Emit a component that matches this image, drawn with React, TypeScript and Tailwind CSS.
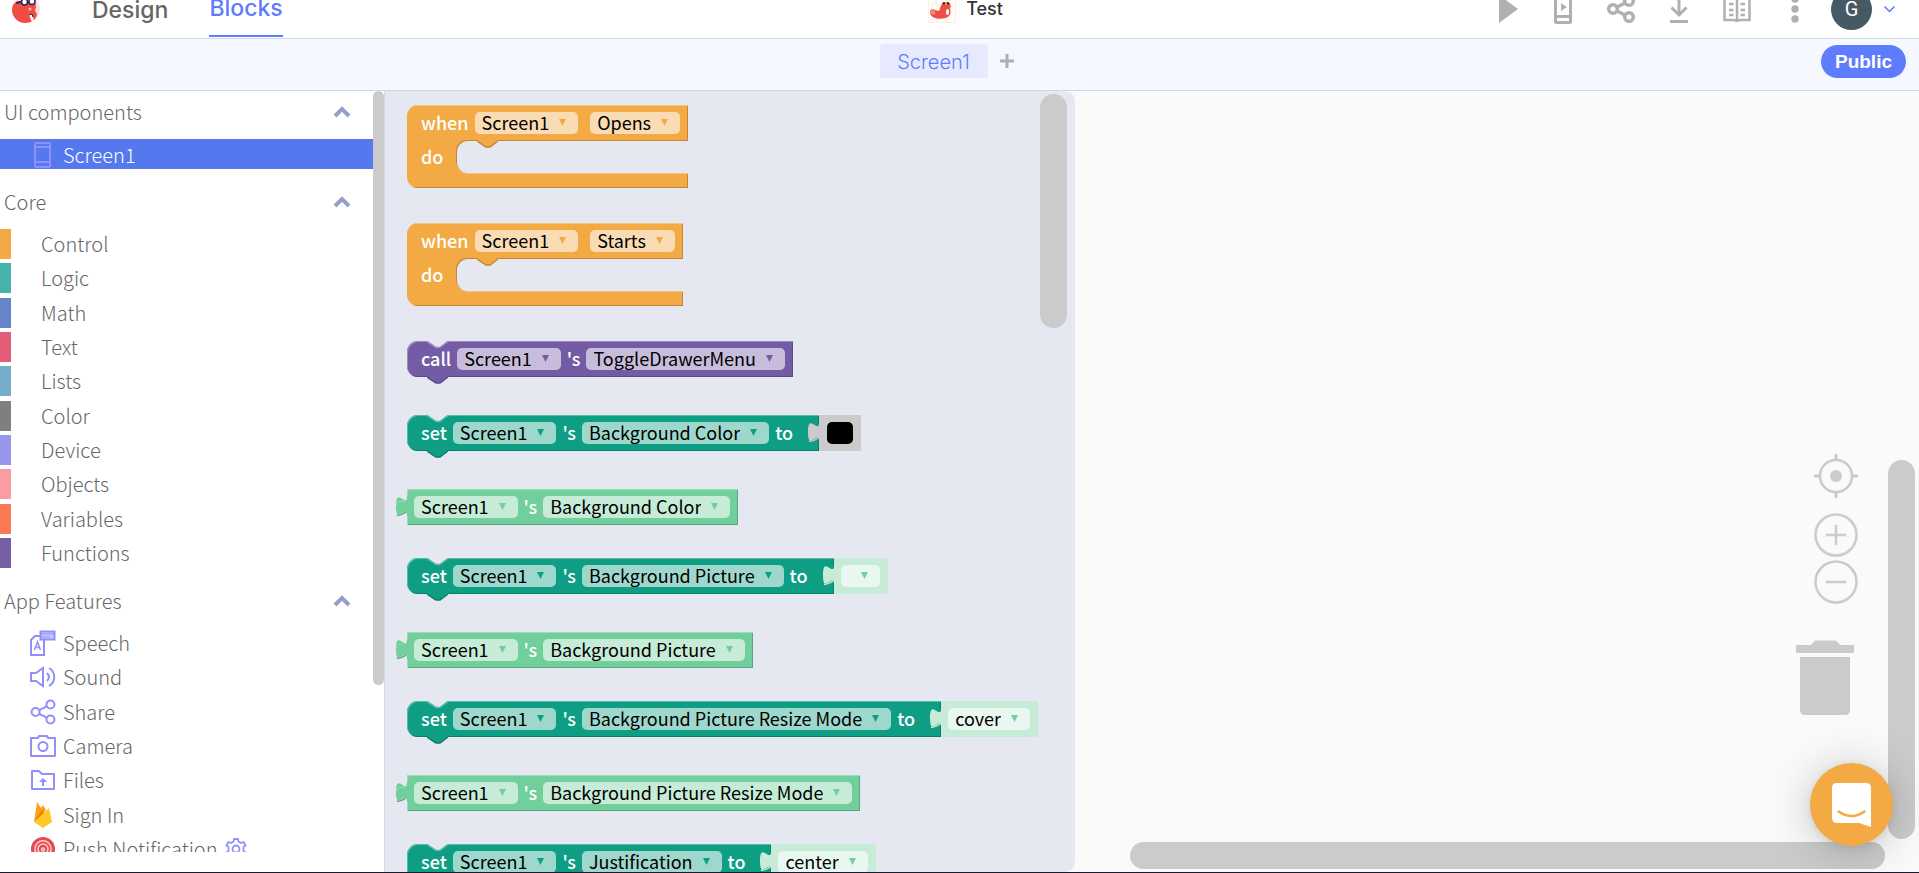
import React from 'react';
import clsx from 'clsx';

type Tone = 'orange' | 'purple' | 'teal' | 'green' | 'mint';

const TONES: Record<Tone, { body: string; field: string; arrow: string; fill: string; light: string; dark: string }> = {
    orange: { body: 'bg-[#f3aa44]', field: 'bg-[#fadcb4]', arrow: 'text-[#f3aa44]', fill: '#f3aa44', light: '#f7c47c', dark: '#c28836' },
    purple: { body: 'bg-[#745ba5]', field: 'bg-[#c7bddb]', arrow: 'text-[#745ba5]', fill: '#745ba5', light: '#9e8cc0', dark: '#5d4984' },
    teal: { body: 'bg-[#0e9e83]', field: 'bg-[#9ed8cc]', arrow: 'text-[#0e9e83]', fill: '#0e9e83', light: '#56bba8', dark: '#0b7e69' },
    green: { body: 'bg-[#71cf9b]', field: 'bg-[#c6ecd7]', arrow: 'text-[#71cf9b]', fill: '#71cf9b', light: '#9cddb9', dark: '#5aa67c' },
    mint: { body: 'bg-[#c6ecd7]', field: 'bg-[#e8f7ef]', arrow: 'text-[#71cf9b]', fill: '#c6ecd7', light: '#c6ecd7', dark: '#c6ecd7' },
};

const CORE = [
    { name: 'Control', color: 'bg-[#f3aa44]' },
    { name: 'Logic', color: 'bg-[#45b3aa]' },
    { name: 'Math', color: 'bg-[#6685c9]' },
    { name: 'Text', color: 'bg-[#e15d78]' },
    { name: 'Lists', color: 'bg-[#75acc9]' },
    { name: 'Color', color: 'bg-[#7f7f7f]' },
    { name: 'Device', color: 'bg-[#9795ec]' },
    { name: 'Objects', color: 'bg-[#fa9ca2]' },
    { name: 'Variables', color: 'bg-[#f97a55]' },
    { name: 'Functions', color: 'bg-[#765fa2]' },
];

/* ---------- Icons ---------- */

const Logo = () => (
    <svg width="28" height="28" viewBox="0 0 28 28">
        <circle cx="14" cy="14" r="14" fill="#fbdfe0" />
        <path d="M0 15c0-6 4-9 9-9h11c3 0 4 3 4 6l-1 4 2 3c-1 6-6 9-12 9C6 28 0 22 0 15z" fill="#f04e45" />
        <path d="M4 8l5-1M16 7h3" stroke="#2c2450" strokeWidth="2" fill="none" />
        <circle cx="12.500" cy="7" r="3" fill="#fff" stroke="#2c2450" strokeWidth="1.500" />
        <circle cx="20" cy="6.500" r="3" fill="#fff" stroke="#2c2450" strokeWidth="1.500" />
        <circle cx="18" cy="14" r="1.500" fill="#fbb" />
        <path d="M17 20l3-1 2 7-2 1z" fill="#fff" />
        <path d="M17 20l3-1 1 3" stroke="#2c2450" fill="none" />
    </svg>
);

const ProjectIcon = () => (
    <svg width="28" height="28" viewBox="0 0 28 28">
        <path d="M.5.5h27v27H.5zM0 9h28M0 19h28M9 0v28M19 0v28M0 0l28 28M28 0L0 28" stroke="#fdf0dc" fill="none" />
        <circle cx="14" cy="14" r="10" stroke="#fdf0dc" fill="none" />
        <path d="M2 17c0-3 3-4 5-2l4 1c1-1 1-6 4-8h6c2 1 2 4 1 6 1 3 1 8-5 9-7 2-15 0-15-6z" fill="#f04e45" />
        <path d="M2 17c0-3 3-4 5-2-1 1 0 3 1 4-3 1-6 0-6-2z" fill="#f58a7c" />
        <path d="M14 7h7v3h-6z" fill="#f5b843" />
        <circle cx="16" cy="8.500" r="1.300" fill="#222" />
        <circle cx="20" cy="8.500" r="1.300" fill="#222" />
        <ellipse cx="19.500" cy="17" rx="1.500" ry="3" fill="#fff" />
    </svg>
);

const PlayIcon = () => (
    <svg width="28" height="28" viewBox="0 0 28 28" fill="#b0b0b0"><path d="M8 0l19 14L8 28z" /></svg>
);

const PhonePlayIcon = () => (
    <svg width="18" height="30" viewBox="0 0 18 30" fill="none" stroke="#b0b0b0">
        <rect x="1.500" y="1.500" width="15" height="27" rx="1" strokeWidth="3" />
        <path d="M2 22.500h14" strokeWidth="3" />
        <path d="M7 9l6 4-6 4z" fill="#b0b0b0" stroke="none" />
    </svg>
);

const ShareIcon = ({ size, width, color }: { size: number; width: number; color: string }) => (
    <svg width={size} height={size} viewBox="0 0 28 28" fill="none" stroke={color} strokeWidth={width}>
        <circle cx="6" cy="14" r="4.300" />
        <circle cx="22" cy="6" r="4.300" />
        <circle cx="22" cy="22" r="4.300" />
        <path d="M10 12l8-4M10 16l8 4" />
    </svg>
);

const DownloadIcon = () => (
    <svg width="18" height="28" viewBox="0 0 18 28" fill="none" stroke="#b0b0b0" strokeWidth="3">
        <path d="M9 2v18M1.500 12.500L9 20l7.500-7.500M0 26.500h18" />
    </svg>
);

const BookIcon = () => (
    <svg width="28" height="28" viewBox="0 0 28 28" fill="none" stroke="#b0b0b0" strokeWidth="2.500">
        <path d="M1.500 3h8.500c3 0 4 1 4 2 0-1 1-2 4-2h8.500v22H18c-3 0-4 1-4 2 0-1-1-2-4-2H1.500zM14 5v21" />
        <path d="M6 9h4.500M6 15h4.500M6 20h4.500M17.500 9H22M17.500 15H22M17.500 20H22" />
    </svg>
);

const Chevron = () => (
    <svg width="18" height="12" viewBox="0 0 18 12" fill="none" stroke="#959fca" strokeWidth="4"><path d="M2 10l7-7 7 7" /></svg>
);

const FEATURES: { name: string; icon: React.ReactNode; settings?: boolean }[] = [
    {
        name: 'Speech',
        icon: (
            <svg width="26" height="26" viewBox="0 0 26 26" fill="none" stroke="#918ffb" strokeWidth="2">
                <path d="M10 6H5L1 10v15h13V10" />
                <rect x="10.500" y="1.500" width="14" height="8" fill="#c9c8fd" />
                <path d="M11 4h13M11 7h9" strokeWidth="1" />
                <path d="M4.500 20l3-8 3 8M5.500 17.500h4" strokeWidth="1.500" />
            </svg>
        ),
    },
    {
        name: 'Sound',
        icon: (
            <svg width="26" height="26" viewBox="0 0 26 26" fill="none" stroke="#918ffb" strokeWidth="2">
                <path d="M1 9h5l7-5v18l-7-5H1z" />
                <path d="M17 9q4 4 0 8M19 4c7 4 7 14 0 18" />
            </svg>
        ),
    },
    { name: 'Share', icon: <ShareIcon size={26} width={2.2} color="#918ffb" /> },
    {
        name: 'Camera',
        icon: (
            <svg width="26" height="26" viewBox="0 0 26 26" fill="none" stroke="#918ffb" strokeWidth="2">
                <path d="M1 5h7l1-2h8l1 2h7v18H1z" strokeLinejoin="round" />
                <circle cx="13" cy="13.500" r="4.500" />
            </svg>
        ),
    },
    {
        name: 'Files',
        icon: (
            <svg width="26" height="26" viewBox="0 0 26 26" fill="none" stroke="#918ffb" strokeWidth="2">
                <path d="M2 4h7l3 3h12v15H2z" strokeLinejoin="round" />
                <path d="M13 11l-4 4h3v4h2v-4h3z" fill="#918ffb" stroke="none" />
            </svg>
        ),
    },
    {
        name: 'Sign In',
        icon: (
            <svg width="26" height="26" viewBox="0 0 26 26">
                <path d="M4 20L7 0l4 6 2-3 3 5z" fill="#ff9f1a" />
                <path d="M4 20l8-12 3 3z" fill="#f57c00" />
                <path d="M4 20L19 6l3 14-9 6z" fill="#ffca28" />
            </svg>
        ),
    },
    {
        name: 'Push Notification',
        settings: true,
        icon: (
            <svg width="26" height="26" viewBox="0 0 26 26" fill="none" stroke="#fbd0d0" strokeWidth="1.500">
                <circle cx="13" cy="13" r="12" fill="#e54b4d" stroke="none" />
                <path d="M7 18a8 8 0 1 1 12 0M9.500 16.500a5 5 0 1 1 7 0" />
                <circle cx="13" cy="13.500" r="1.500" />
            </svg>
        ),
    },
];

/* ---------- Block pieces ---------- */

const NotchCut = ({ tone }: { tone: Tone }) => (
    <svg className="absolute top-0 left-5" width="22" height="8" viewBox="0 0 22 8">
        <path d="M0 0l9 6h4l8-6z" fill="#e5e8f0" />
        <path d="M0 .5l9 6h4l8-6" fill="none" stroke={TONES[tone].light} strokeWidth="1.500" />
    </svg>
);

const NotchBump = ({ tone, className }: { tone: Tone; className: string }) => (
    <svg className={clsx('absolute left-5', className)} width="22" height="8" viewBox="0 0 22 8">
        <path d="M0 0v1l9 6h4l8-6V0z" fill={TONES[tone].fill} />
        <path d="M0 1l9 6h4l8-6" fill="none" stroke={TONES[tone].dark} strokeWidth="1.500" />
    </svg>
);

// output tab on the left edge of a value block
const Tab = ({ fill, dark, light }: { fill: string; dark: string; light: string }) => (
    <svg className="absolute top-[7px] -left-[11px]" width="12" height="22" viewBox="0 0 12 22">
        <path d="M12 0h-1c0 13.500-11-10.500-11 10s11-3.500 11 10h1z" fill={fill} />
        <path d="M10 4c-2 3-9-1-9.500 5" fill="none" stroke={light} />
        <path d="M1 19q3 1 9-3" fill="none" stroke={dark} strokeWidth="1.500" />
    </svg>
);

const Word = ({ children }: { children: React.ReactNode }) => (
    <span className="pb-0.5 text-white font-medium whitespace-pre">{children}</span>
);

const Field = ({ value, tone }: { value: string; tone: Tone }) => (
    <span className={clsx('relative flex items-center h-[22px] rounded-[5px]', TONES[tone].field)}>
        <select
            aria-label={value || 'picture'}
            className="appearance-none field-sizing-content h-8 min-w-[39px] pl-[7px] pr-[29px] pb-0.5 text-black leading-[30px] outline-none"
        >
            <option>{value}</option>
        </select>
        <svg className={clsx('absolute right-3 top-[7px] pointer-events-none', TONES[tone].arrow)} width="7" height="7" viewBox="0 0 7 7" fill="currentColor">
            <path d="M0 0h7L3.500 7z" />
        </svg>
    </span>
);

const EDGE = {
    purple: 'shadow-[inset_1px_1px_#9e8cc0,inset_-1px_-1px_#5d4984]',
    teal: 'shadow-[inset_1px_1px_#56bba8,inset_-1px_-1px_#0b7e69]',
    green: 'shadow-[inset_1px_1px_#9cddb9,inset_-1px_-1px_#5aa67c]',
};

const EventBlock = ({ event }: { event: string }) => (
    <div className="w-max rounded-l-[11px] overflow-hidden bg-[#f3aa44] mb-[35px]">
        <div className="h-9 flex items-center gap-1.5 pl-[14px] pr-2 shadow-[inset_0_1px_#f7c47c,inset_-1px_0_#c28836]">
            <Word>when</Word>
            <Field value="Screen1" tone="orange" />
            <span className="w-0" />
            <Field value={event} tone="orange" />
        </div>
        <div className="h-8 flex">
            <div className="w-[50px] pl-[14px] flex items-center"><Word>do</Word></div>
            <div className="relative flex-1 bg-[#e5e8f0] rounded-l-[11px] shadow-[-1px_-1px_#c28836,0_1px_#f7c47c]">
                <NotchBump tone="orange" className="-top-px" />
            </div>
        </div>
        <div className="h-[15px] shadow-[inset_-1px_-1px_#c28836]" />
    </div>
);

const CallBlock = () => (
    <div className={clsx('relative w-max h-9 flex items-center gap-1.5 pl-[14px] pr-2 rounded-l-[11px] mb-[38px]', TONES.purple.body, EDGE.purple)}>
        <NotchCut tone="purple" />
        <NotchBump tone="purple" className="-bottom-[7px]" />
        <Word>call</Word>
        <Field value="Screen1" tone="purple" />
        <Word>'s</Word>
        <Field value="ToggleDrawerMenu" tone="purple" />
    </div>
);

const SetBlock = ({ prop, value }: { prop: string; value?: string }) => (
    <div className="flex w-max mb-[38px]">
        <div className={clsx('relative h-9 flex items-center gap-1.5 pl-[14px] pr-[26px] rounded-l-[11px]', TONES.teal.body, EDGE.teal)}>
            <NotchCut tone="teal" />
            <NotchBump tone="teal" className="-bottom-[7px]" />
            <Word>set</Word>
            <Field value="Screen1" tone="teal" />
            <Word>'s</Word>
            <Field value={prop} tone="teal" />
            <Word>to</Word>
        </div>
        {value === undefined ? (
            <div className="relative h-9 px-2 flex items-center bg-[#cbcbcb]">
                <Tab fill="#cbcbcb" dark="#cbcbcb" light="#cbcbcb" />
                <button aria-label="Black" className="w-[26px] h-[22px] rounded-[5px] bg-black" />
            </div>
        ) : (
            <div className={clsx('relative h-9 pl-[7px] pr-2 flex items-center rounded-r-xs', TONES.mint.body)}>
                <Tab fill="#c6ecd7" dark="#c6ecd7" light="#c6ecd7" />
                <Field value={value} tone="mint" />
            </div>
        )}
    </div>
);

const GetBlock = ({ prop }: { prop: string }) => (
    <div className={clsx('relative w-max h-9 flex items-center gap-1.5 pl-[7px] pr-2 mb-[33px]', TONES.green.body, EDGE.green)}>
        <Tab fill={TONES.green.fill} dark={TONES.green.dark} light={TONES.green.light} />
        <Field value="Screen1" tone="green" />
        <Word>'s</Word>
        <Field value={prop} tone="green" />
    </div>
);

/* ---------- Page parts ---------- */

const HeaderButton = ({ label, children }: { label: string; children: React.ReactNode }) => (
    <button aria-label={label} className="w-7 flex justify-center">{children}</button>
);

const Header = () => (
    <header className="h-[59px] -mt-5 shrink-0 grid grid-cols-[1fr_auto_1fr] items-center bg-white border-b border-[#cfd6ea] font-['Inter',sans-serif]">
        <div className="flex items-center h-full pl-3">
            <Logo />
            <nav className="flex gap-[41px] h-full pl-[52px] text-[23px] font-medium">
                <a href="#design" className="flex items-center pt-0.5 text-[#666]">Design</a>
                <a href="#blocks" className="flex items-center pt-0.5 h-[57px] border-b-2 border-[#5f7cff] text-[#5f7cff]">Blocks</a>
            </nav>
        </div>
        <div className="flex items-center gap-[10px] pl-3">
            <ProjectIcon />
            <h1 className="text-lg font-medium text-[#333]">Test</h1>
        </div>
        <div className="flex items-center justify-end gap-[30px] pr-6">
            <HeaderButton label="Play"><PlayIcon /></HeaderButton>
            <HeaderButton label="Live test"><PhonePlayIcon /></HeaderButton>
            <HeaderButton label="Share"><ShareIcon size={28} width={3.5} color="#b0b0b0" /></HeaderButton>
            <HeaderButton label="Download"><DownloadIcon /></HeaderButton>
            <HeaderButton label="Docs"><BookIcon /></HeaderButton>
            <HeaderButton label="More">
                <svg width="8" height="28" viewBox="0 0 8 28" fill="#b0b0b0">
                    <circle cx="4" cy="4" r="3.700" />
                    <circle cx="4" cy="14" r="3.700" />
                    <circle cx="4" cy="24" r="3.700" />
                </svg>
            </HeaderButton>
            <button aria-label="Account" className="flex items-center gap-3 -ml-2">
                <span className="size-[41px] rounded-full bg-[#455a64] text-white text-xl font-['Roboto',sans-serif] flex items-center justify-center">G</span>
                <svg width="11" height="7" viewBox="0 0 11 7" fill="none" stroke="#5f7cff" strokeWidth="1.500"><path d="M.5.5l5 5 5-5" /></svg>
            </button>
        </div>
    </header>
);

const ScreenBar = () => (
    <div className="h-[52px] shrink-0 grid grid-cols-[1fr_auto_1fr] items-center pb-[7px] bg-[#f5f8fe] border-b border-[#cfd6ea]">
        <div />
        <div className="flex items-center pr-[14px]">
            <button className="h-[34px] w-[108px] pt-px rounded-t-sm bg-[#e7e9ff] text-[#5f7cff] text-xl font-light font-['Inter',sans-serif]">Screen1</button>
            <button aria-label="Add screen" className="w-[38px] flex justify-center">
                <svg width="14" height="14" viewBox="0 0 14 14" stroke="#b0b0b0" strokeWidth="3"><path d="M7 0v14M0 7h14" /></svg>
            </button>
        </div>
        <div className="flex justify-end pr-[13px]">
            <button className="h-[33px] px-[14px] rounded-full bg-[#5f7cff] text-white text-[19px] leading-none font-bold font-['Liberation_Sans',Arial,sans-serif]">Public</button>
        </div>
    </div>
);

const SectionTitle = ({ children }: { children: React.ReactNode }) => (
    <button className="w-full h-[42px] mb-1.5 pl-1 pr-[22px] flex items-center justify-between">
        {children}
        <Chevron />
    </button>
);

const Sidebar = () => (
    <aside className="w-[385px] shrink-0 border-r border-[#cfd6ea] bg-white pb-5">
        <div className="h-full flex overflow-hidden text-xl leading-[30px] font-extralight text-[#666]">
            <div className="flex-1 shrink-0 flex flex-col gap-3">
                <section>
                    <SectionTitle>UI components</SectionTitle>
                    <a href="#screen1" className="h-[30px] pt-0.5 flex items-center bg-[#5578ee] text-white">
                        <svg className="ml-[34px] mr-3" width="17" height="26" viewBox="0 0 17 26" fill="none" stroke="#918ffb" strokeWidth="2">
                            <rect x="1" y="1" width="15" height="24" rx="1" />
                            <path d="M1 5h15M1 20h15" />
                        </svg>
                        Screen1
                    </a>
                </section>
                <section>
                    <SectionTitle>Core</SectionTitle>
                    <ul className="h-[339px] flex flex-col justify-between">
                        {CORE.map((c) => (
                            <li key={c.name} className="h-[30px] flex items-center">
                                <span className={clsx('w-[11px] h-[30px]', c.color)} />
                                <a href="#core" className="pl-[30px]">{c.name}</a>
                            </li>
                        ))}
                    </ul>
                </section>
                <section>
                    <SectionTitle>App Features</SectionTitle>
                    <ul className="h-[236px] flex flex-col justify-between">
                        {FEATURES.map((f) => (
                            <li key={f.name}>
                                <a href="#features" className="h-[30px] flex items-center pl-[30px] gap-[7px]">
                                    {f.icon}
                                    {f.name}
                                    {f.settings && (
                                        <svg width="22" height="22" viewBox="0 0 22 22" fill="none" stroke="#918ffb" strokeWidth="1.800">
                                            <path d="M9 1h4l.5 2.500L16 5l2.500-1 2 3.500-2 1.500v4l2 1.500-2 3.500-2.500-1-2.500 1.500L13 21H9l-.5-2.500L6 17l-2.500 1-2-3.500 2-1.500V9l-2-1.500 2-3.500L6 5l2.500-1.500z" strokeLinejoin="round" />
                                            <circle cx="11" cy="11" r="3.500" />
                                        </svg>
                                    )}
                                </a>
                            </li>
                        ))}
                    </ul>
                </section>
            </div>
            <div className="w-[11px] h-[594px] rounded-full bg-[#cbcbcb]" />
        </div>
    </aside>
);

const Flyout = () => (
    <div className="w-[690px] shrink-0 flex justify-between overflow-hidden rounded-r-[10px] bg-[#e5e8f0] pt-[3px] pr-2">
        <div className="pl-[22px] pt-[11px] text-lg leading-[22px]">
            <EventBlock event="Opens" />
            <EventBlock event="Starts" />
            <CallBlock />
            <SetBlock prop="Background Color" />
            <GetBlock prop="Background Color" />
            <SetBlock prop="Background Picture" value="" />
            <GetBlock prop="Background Picture" />
            <SetBlock prop="Background Picture Resize Mode" value="cover" />
            <GetBlock prop="Background Picture Resize Mode" />
            <SetBlock prop="Justification" value="center" />
        </div>
        <div className="w-[27px] h-[234px] shrink-0 rounded-full bg-[#cbcbcb]" />
    </div>
);

const Workspace = () => (
    <main className="relative flex-1 overflow-hidden">
        {/* Zoom controls */}
        <div className="absolute right-[61px] bottom-[268px] flex flex-col">
            <button aria-label="Center" className="mb-[15px]">
                <svg width="44" height="44" viewBox="0 0 44 44" fill="none" stroke="#cbcbcb" strokeWidth="2.500">
                    <circle cx="22" cy="22" r="16" />
                    <circle cx="22" cy="22" r="6" fill="#cbcbcb" stroke="none" />
                    <path d="M22 0v6M22 38v6M0 22h6M38 22h6" strokeWidth="3" />
                </svg>
            </button>
            <button aria-label="Zoom in" className="mb-[3px]">
                <svg width="44" height="44" viewBox="0 0 44 44" fill="none" stroke="#cbcbcb" strokeWidth="2.500">
                    <circle cx="22" cy="22" r="20.500" />
                    <path d="M22 12v20M12 22h20" />
                </svg>
            </button>
            <button aria-label="Zoom out">
                <svg width="44" height="44" viewBox="0 0 44 44" fill="none" stroke="#cbcbcb" strokeWidth="2.500">
                    <circle cx="22" cy="22" r="20.500" />
                    <path d="M12 22h20" />
                </svg>
            </button>
        </div>
        <button aria-label="Trash" className="absolute right-[65px] bottom-[157px]">
            <svg width="58" height="75" viewBox="0 0 58 75" fill="#cbcbcb">
                <path d="M0 5h15l4-4.500h21L44 5h14v8H0zM4 17h50v53q0 5-5 5H9q-5 0-5-5z" />
            </svg>
        </button>
        {/* Scroll bars */}
        <div className="absolute right-1 bottom-[33px] w-[27px] h-[379px] rounded-full bg-[#cbcbcb]" />
        <div className="absolute left-[55px] right-[34px] bottom-[3px] h-[27px] rounded-full bg-[#cbcbcb]" />
        {/* Chat launcher */}
        <button
            aria-label="Chat"
            className="absolute right-[26px] bottom-[26px] size-[83px] rounded-full bg-[#f3aa44] flex items-center justify-center shadow-[0_2px_8px_rgba(0,0,0,0.08),0_4px_45px_rgba(0,0,0,0.22)]"
        >
            <svg width="39" height="44" viewBox="0 0 39 44">
                <path d="M5 0h29q5 0 5 5v39l-12-4H5q-5 0-5-5V5q0-5 5-5z" fill="#fff" />
                <path d="M6.500 28.500q13 9 26 0" fill="none" stroke="#f3aa44" strokeWidth="2.500" strokeLinecap="round" />
            </svg>
        </button>
    </main>
);

export default function App() {
    return (
        <div className="h-screen flex flex-col overflow-hidden bg-[#fafafa] border-b border-[#1b1a2c] font-['Noto_Sans_CJK_SC',sans-serif]">
            <Header />
            <ScreenBar />
            <div className="flex flex-1 min-h-0">
                <Sidebar />
                <Flyout />
                <Workspace />
            </div>
        </div>
    );
}
